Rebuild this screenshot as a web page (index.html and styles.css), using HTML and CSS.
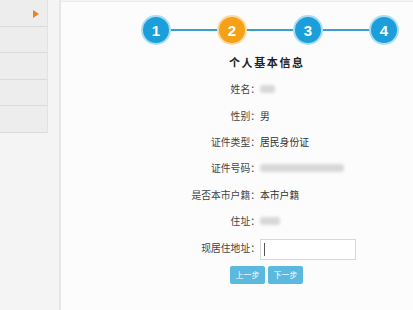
FILE: index.html
```html
<!DOCTYPE html>
<html lang="zh">
<head>
<meta charset="utf-8">
<link rel="stylesheet" href="styles.css">
</head>
<body>
<div class="page">
  <aside class="side">
    <div class="side-list">
      <div class="side-item active"><span class="arrow"></span></div>
      <div class="side-item"></div>
      <div class="side-item"></div>
      <div class="side-item"></div>
      <div class="side-item"></div>
    </div>
  </aside>
  <div class="divider"></div>
  <main class="main">
    <div class="steps">
      <span class="step blue">1</span>
      <span class="link"></span>
      <span class="step orange">2</span>
      <span class="link"></span>
      <span class="step blue">3</span>
      <span class="link"></span>
      <span class="step blue">4</span>
    </div>
    <h1 class="title">个人基本信息</h1>
    <div class="form">
      <div class="label">姓名：</div><div class="value"><span class="blur short"></span></div>
      <div class="label">性别：</div><div class="value">男</div>
      <div class="label">证件类型：</div><div class="value">居民身份证</div>
      <div class="label">证件号码：</div><div class="value"><span class="blur long"></span></div>
      <div class="label">是否本市户籍：</div><div class="value">本市户籍</div>
      <div class="label">住址：</div><div class="value"><span class="blur mid"></span></div>
      <div class="label lbl-input">现居住地址：</div><div class="value"><div class="input"><span class="caret"></span></div></div>
    </div>
    <div class="buttons">
      <button class="btn">上一步</button>
      <button class="btn">下一步</button>
    </div>
  </main>
</div>
</body>
</html>
```

FILE: styles.css
```css
* { box-sizing: border-box; margin: 0; padding: 0; }
html, body { width: 413px; height: 310px; overflow: hidden; }
body {
  background: #f4f4f4;
  font-family: "Noto Sans CJK SC", "Liberation Sans", sans-serif;
  color: #333;
}
.page { display: flex; height: 310px; }
.side { width: 48px; flex: none; }
.side-list { background: #ededed; border-right: 1px solid #e2e2e2; }
.side-item {
  height: 26.5px;
  border-bottom: 1px solid #dadada;
  position: relative;
}
.arrow {
  position: absolute;
  left: 33px;
  top: 10px;
  width: 0; height: 0;
  border-top: 4px solid transparent;
  border-bottom: 4px solid transparent;
  border-left: 6px solid #e8852a;
}
.divider {
  width: 13px;
  flex: none;
  border-right: 2px solid #e6e6e6;
}
.main {
  flex: 1;
  background: #fcfcfc;
  border-top: 1px solid #ececec;
  margin-top: 1px;
  display: flex;
  flex-direction: column;
}
.steps {
  display: flex;
  align-items: center;
  margin: 13px 0 0 80px;
}
.step {
  width: 30px; height: 30px;
  border-radius: 50%;
  border: 2px solid;
  display: flex;
  align-items: center;
  justify-content: center;
  color: #fff;
  font-family: "Liberation Sans", sans-serif;
  font-weight: bold;
  font-size: 15px;
  flex: none;
}
.step.blue { background: #1b9ed9; border-color: #a9ddf4; }
.step.orange { background: #f5a116; border-color: #fbd9a3; }
.link { width: 46px; height: 2px; background: #3a9fcf; flex: none; }
.title {
  margin-top: 9px;
  margin-left: 168px;
  font-size: 11px;
  font-weight: bold;
  letter-spacing: 1.6px;
  line-height: 16px;
  color: #222;
}
.form {
  display: grid;
  grid-template-columns: 199px 1fr;
  grid-auto-rows: 26.4px;
  margin-top: 6px;
  font-size: 9.8px;
  align-items: center;
}
.label { text-align: right; color: #444; }
.value { color: #333; display: flex; align-items: center; }
.blur {
  display: inline-block;
  height: 8px;
  background: #d8d8d8;
  filter: blur(1.5px);
  border-radius: 3px;
}
.blur.short { width: 15px; }
.blur.mid { width: 20px; }
.blur.long { width: 84px; }
.input {
  width: 96px;
  height: 21px;
  border: 1px solid #d8d8d8;
  background: #fff;
  margin-top: 3px;
  position: relative;
}
.caret {
  position: absolute;
  left: 3px; top: 3px;
  width: 1px; height: 13px;
  background: #555;
}
.buttons {
  display: flex;
  gap: 3px;
  margin: 5px 0 0 169px;
}
.btn {
  width: 35px; height: 18px;
  border: none;
  border-radius: 2px;
  background: #5bb9df;
  color: #fff;
  font-family: "Noto Sans CJK SC", sans-serif;
  font-size: 8px;
  line-height: 18px;
}
```
